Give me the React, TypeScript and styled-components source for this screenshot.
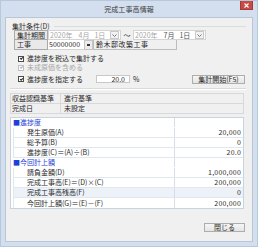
import React from "react";
import styled, { createGlobalStyle } from "styled-components";

const GlobalStyle = createGlobalStyle`
  html, body {
    margin: 0;
    padding: 0;
  }
  body {
    font-family: "Noto Sans CJK JP", "Noto Sans", sans-serif;
    font-size: 7px;
    color: #2a2a2a;
    background: #d3dfee;
    white-space: nowrap;
  }
`;

type Row = { label: string; value?: string; section?: boolean; tint?: boolean };

const rows: Row[] = [
  { label: "■進捗度", section: true },
  { label: "発生原価(A)", value: "20,000" },
  { label: "総予算(B)", value: "0" },
  { label: "進捗度(C)＝(A)÷(B)", value: "20.0" },
  { label: "■今回計上額", section: true },
  { label: "請負金額(D)", value: "1,000,000" },
  { label: "完成工事高(E)＝(D)×(C)", value: "200,000" },
  { label: "完成工事高残高(F)", value: "0", tint: true },
  { label: "今回計上額(G)＝(E)－(F)", value: "200,000" },
];

const App = () => {
  return (
    <>
      <GlobalStyle />
      <Window>
        <TitleBar>
          <span />
          <Title>完成工事高情報</Title>
          <CloseButton>
            <svg width="5" height="5" viewBox="0 0 5 5">
              <path d="M0.5 0.5 L4.5 4.5 M4.5 0.5 L0.5 4.5" stroke="#fff" strokeWidth="1.1" />
            </svg>
          </CloseButton>
        </TitleBar>
        <Client>
          <GroupHeader>
            <span>集計条件(<u>D</u>)</span>
            <GroupLine />
          </GroupHeader>
          <FieldRow>
            <LabelCell>集計期間</LabelCell>
            <DateBox>
              <DateText>2020年</DateText>
              <DateText>4月</DateText>
              <DateText>1日</DateText>
              <DropButton>
                <Chevron />
              </DropButton>
            </DateBox>
            <Tilde>～</Tilde>
            <DateBox>
              <DateText>2020年</DateText>
              <DateText $dark>7月</DateText>
              <DateText $dark>1日</DateText>
              <DropButton>
                <Chevron />
              </DropButton>
            </DateBox>
          </FieldRow>
          <FieldRow>
            <LabelCell $last>工事</LabelCell>
            <CodeInput>50000000</CodeInput>
            <PickButton>
              <PickMark />
            </PickButton>
            <NameBox>鈴木邸改築工事</NameBox>
          </FieldRow>
          <CheckRow>
            <CheckBox $checked />
            <span>進捗度を税込で集計する</span>
          </CheckRow>
          <CheckRow $disabled>
            <CheckBox $checked $disabled />
            <span>未成原価を含める</span>
          </CheckRow>
          <SpecifyRow>
            <CheckRow as="div">
              <CheckBox $checked />
              <span>進捗度を指定する</span>
            </CheckRow>
            <RateInput>20.0</RateInput>
            <Percent>%</Percent>
            <Spacer />
            <SmallButton $width={53}>集計開始(F5)</SmallButton>
          </SpecifyRow>
          <Divider />
          <InfoTable>
            <InfoRow>
              <InfoLabel>収益認識基準</InfoLabel>
              <InfoValue>進行基準</InfoValue>
            </InfoRow>
            <InfoRow>
              <InfoLabel>完成日</InfoLabel>
              <InfoValue>未設定</InfoValue>
            </InfoRow>
          </InfoTable>
          <ResultTable>
            {rows.map((r) => (
              <ResultRow key={r.label} $tint={r.tint} $section={r.section}>
                <ResultLabel $section={r.section}>{r.label}</ResultLabel>
                <ResultValue>{r.value}</ResultValue>
              </ResultRow>
            ))}
          </ResultTable>
          <Footer>
            <SmallButton $width={41}>閉じる</SmallButton>
          </Footer>
        </Client>
      </Window>
    </>
  );
};

export default App;

const Chevron = () => (
  <svg width="5" height="3" viewBox="0 0 5 3">
    <path d="M0.5 0.5 L2.5 2.5 L4.5 0.5" stroke="#6a6a6a" strokeWidth="0.9" fill="none" />
  </svg>
);

const Window = styled.div`
  width: 258px;
  height: 247px;
  box-sizing: border-box;
  display: flex;
  flex-direction: column;
  background: #d3dfee;
  border: 1px solid #b7c7dc;
`;

const TitleBar = styled.div`
  height: 16px;
  display: grid;
  grid-template-columns: 1fr auto 1fr;
  align-items: start;
`;

const Title = styled.div`
  margin-top: 5px;
  font-size: 7px;
  line-height: 7px;
  color: #3b3b3b;
  letter-spacing: 0.1px;
`;

const CloseButton = styled.div`
  justify-self: end;
  width: 13px;
  height: 9px;
  margin-right: 4px;
  background: #c84a44;
  border: 1px solid #a83a36;
  border-top: none;
  box-sizing: border-box;
  display: flex;
  align-items: center;
  justify-content: center;
`;

const Client = styled.div`
  flex: 1;
  margin: 0 4px 4px;
  background: #f0f0f0;
  border: 1px solid #b9c6d6;
  display: flex;
  flex-direction: column;
  padding: 0 6px 0 4px;
`;

const GroupHeader = styled.div`
  display: flex;
  align-items: center;
  height: 7px;
  margin-top: 5px;
  padding-left: 2px;
  line-height: 7px;
  u {
    text-decoration: underline;
  }
`;

const GroupLine = styled.div`
  flex: 1;
  height: 1px;
  background: #dcdcdc;
  margin-left: 4px;
`;

const FieldRow = styled.div`
  display: flex;
  align-items: stretch;
  height: 10px;
  padding-left: 4px;
  &:first-of-type {
    margin-top: 1px;
  }
`;

const LabelCell = styled.div<{ $last?: boolean }>`
  width: 34px;
  flex-shrink: 0;
  box-sizing: border-box;
  border: 1px solid #a9a9a9;
  border-top: ${(p) => (p.$last ? "none" : "1px solid #a9a9a9")};
  background: #e9e9e9;
  padding-left: 2px;
  display: flex;
  align-items: center;
  line-height: 7px;
`;

const DateBox = styled.div`
  width: 73px;
  flex-shrink: 0;
  box-sizing: border-box;
  border: 1px solid #d4d4d4;
  background: #ffffff;
  display: flex;
  align-items: center;
  padding-left: 1px;
  gap: 5px;
  overflow: hidden;
`;

const DateText = styled.span<{ $dark?: boolean }>`
  flex-shrink: 0;
  color: ${(p) => (p.$dark ? "#555" : "#a8a8a8")};
  line-height: 7px;
  &:nth-child(2) {
    margin-left: 1px;
  }
`;

const DropButton = styled.div`
  margin-left: auto;
  margin-right: 1px;
  width: 7px;
  height: 6px;
  flex-shrink: 0;
  border: 1px solid #c8c8c8;
  background: #f2f2f2;
  display: flex;
  align-items: center;
  justify-content: center;
`;

const Tilde = styled.div`
  width: 12px;
  flex-shrink: 0;
  display: flex;
  align-items: center;
  justify-content: center;
  line-height: 7px;
`;

const CodeInput = styled.div`
  width: 36px;
  flex-shrink: 0;
  box-sizing: border-box;
  background: #ffffff;
  border-bottom: 1px solid #d4d4d4;
  padding-left: 1px;
  display: flex;
  align-items: center;
  line-height: 7px;
`;

const PickButton = styled.div`
  width: 9px;
  flex-shrink: 0;
  box-sizing: border-box;
  border: 1px solid #c4c4c4;
  background: #ececec;
  display: flex;
  align-items: center;
  justify-content: center;
`;

const PickMark = styled.div`
  width: 3px;
  height: 2px;
  background: #333;
`;

const NameBox = styled.div`
  width: 84px;
  flex-shrink: 0;
  box-sizing: border-box;
  border: 1px solid #bdbdbd;
  border-top: none;
  background: #f0f0f0;
  padding-left: 2px;
  display: flex;
  align-items: center;
  line-height: 7px;
  letter-spacing: 0.5px;
`;

const CheckRow = styled.label<{ $disabled?: boolean }>`
  display: flex;
  align-items: center;
  height: 9px;
  padding-left: 8px;
  gap: 3px;
  line-height: 7px;
  color: ${(p) => (p.$disabled ? "#a8a8a8" : "#2a2a2a")};
  &:first-of-type {
    margin-top: 4px;
  }
`;

const CheckBox = styled.span<{ $checked?: boolean; $disabled?: boolean }>`
  width: 6px;
  height: 6px;
  box-sizing: border-box;
  border: 1px solid ${(p) => (p.$disabled ? "#c0c0c0" : "#4a4a4a")};
  background: #ffffff;
  display: flex;
  align-items: center;
  justify-content: center;
  &::after {
    content: "";
    display: ${(p) => (p.$checked ? "block" : "none")};
    width: 2px;
    height: 1px;
    margin-top: -1px;
    border-left: 1px solid ${(p) => (p.$disabled ? "#b0b0b0" : "#222")};
    border-bottom: 1px solid ${(p) => (p.$disabled ? "#b0b0b0" : "#222")};
    transform: rotate(-45deg);
  }
`;

const SpecifyRow = styled.div`
  display: flex;
  align-items: center;
  height: 8px;
  margin-top: 3px;
  ${CheckRow} {
    margin-top: 0;
  }
`;

const RateInput = styled.div`
  margin-left: 13px;
  width: 34px;
  height: 8px;
  box-sizing: border-box;
  border: 1px solid #c8c8c8;
  background: #ffffff;
  text-align: right;
  padding-right: 4px;
  line-height: 6px;
`;

const Percent = styled.span`
  margin-left: 3px;
  line-height: 7px;
`;

const Spacer = styled.div`
  flex: 1;
`;

const SmallButton = styled.div<{ $width: number }>`
  width: ${(p) => p.$width}px;
  height: 9px;
  box-sizing: border-box;
  border: 1px solid #adadad;
  background: linear-gradient(#f6f6f6, #e4e4e4);
  display: flex;
  align-items: center;
  justify-content: center;
  line-height: 7px;
  margin-right: 1px;
`;

const Divider = styled.div`
  height: 1px;
  background: #dadada;
  margin: 5px 0 3px;
  border-bottom: 1px solid #ffffff;
`;

const InfoTable = styled.div`
  margin-right: 2px;
  border-top: 1px solid #d8d8d8;
`;

const InfoRow = styled.div`
  display: flex;
  height: 9px;
  border-bottom: 1px solid #d8d8d8;
  border-left: 1px solid #d8d8d8;
  border-right: 1px solid #d8d8d8;
`;

const InfoLabel = styled.div`
  width: 48px;
  padding-left: 1px;
  border-right: 1px solid #d8d8d8;
  line-height: 9px;
`;

const InfoValue = styled.div`
  flex: 1;
  padding-left: 3px;
  line-height: 9px;
`;

const ResultTable = styled.div`
  margin-top: 3px;
  margin-right: 2px;
  background: #ffffff;
  border: 1px solid #c9d3df;
`;

const ResultRow = styled.div<{ $tint?: boolean; $section?: boolean }>`
  display: flex;
  height: 10px;
  box-sizing: border-box;
  margin-left: ${(p) => (p.$section ? "0" : "2px")};
  border-bottom: 1px solid ${(p) => (p.$section ? "transparent" : "#e1e7ef")};
  border-left: ${(p) => (p.$section ? "none" : "1px solid #e1e7ef")};
  background: ${(p) => (p.$tint ? "#edf2f9" : "#ffffff")};
  &:last-child {
    border-bottom: none;
  }
`;

const ResultLabel = styled.div<{ $section?: boolean }>`
  flex: 1;
  display: flex;
  align-items: center;
  padding-left: ${(p) => (p.$section ? "2px" : "13px")};
  color: ${(p) => (p.$section ? "#1f3fd6" : "#2a2a2a")};
  line-height: 7px;
`;

const ResultValue = styled.div`
  width: 69px;
  box-sizing: border-box;
  border-left: 1px solid #d5dde7;
  display: flex;
  align-items: center;
  justify-content: flex-end;
  padding-right: 2px;
  line-height: 7px;
  letter-spacing: 0.2px;
`;

const Footer = styled.div`
  display: flex;
  justify-content: flex-end;
  margin-top: 14px;
`;
